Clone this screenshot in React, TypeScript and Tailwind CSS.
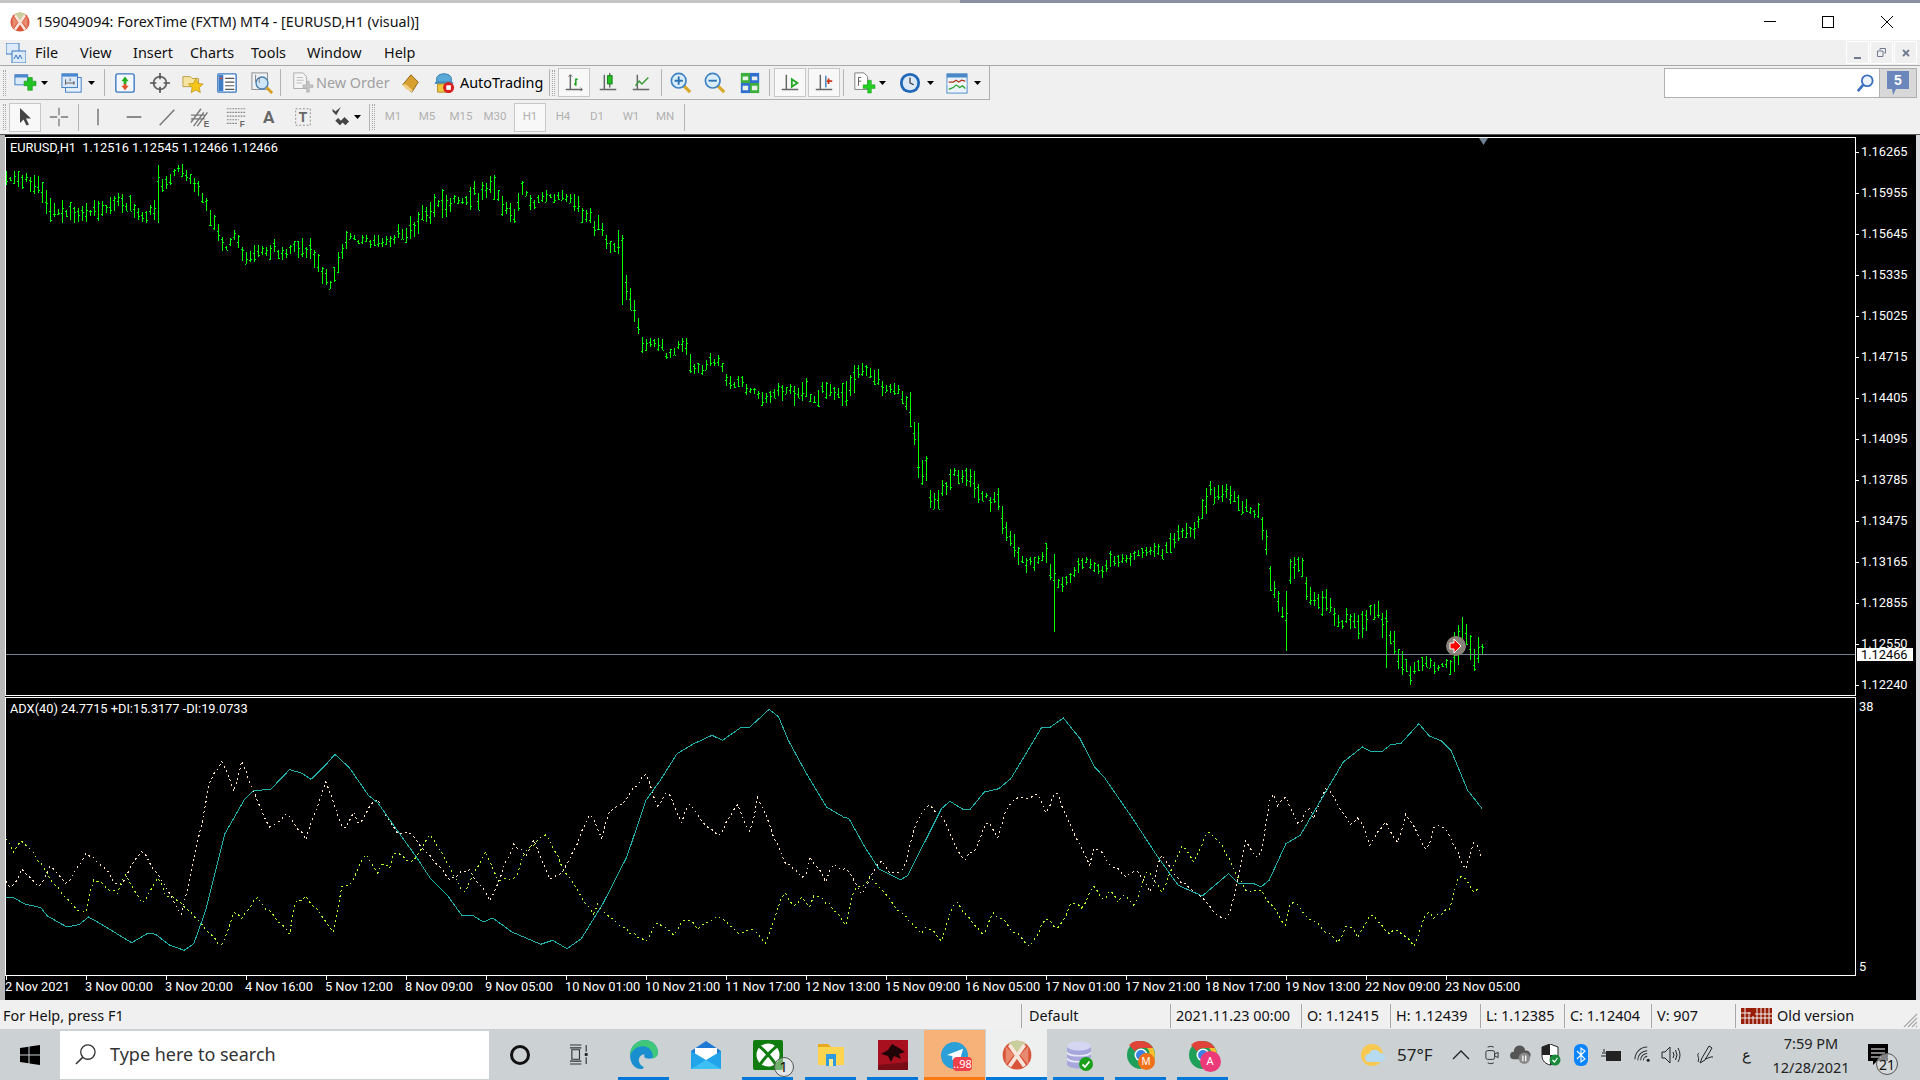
import React, { useMemo } from "react";

type P = [number, number];

const rng = (seed: number) => {
  let s = seed;
  return () => {
    s = (s * 1664525 + 1013904223) >>> 0;
    return s / 4294967296;
  };
};

const interp = (pts: P[], x: number) => {
  for (let i = 1; i < pts.length; i++) {
    if (x <= pts[i][0]) {
      const [x0, y0] = pts[i - 1];
      const [x1, y1] = pts[i];
      return y0 + ((y1 - y0) * (x - x0)) / (x1 - x0 || 1);
    }
  }
  return pts[pts.length - 1][1];
};

// price path, read off the chart in three stretches
const path1: P[] = [[6, 180], [20, 178], [40, 187], [50, 212], [80, 215], [110, 208], [125, 202], [140, 220], [155, 210], [160, 187], [180, 169], [195, 187], [210, 213], [225, 250], [235, 237], [245, 263], [260, 247], [285, 253], [310, 247], [330, 287], [338, 263], [345, 240], [385, 240], [405, 233], [430, 213], [440, 202], [480, 195]];
const path2: P[] = ([[8, 125], [40, 115], [60, 150], [100, 190], [115, 170], [130, 110], [150, 165], [200, 130], [260, 145], [300, 175], [330, 200], [345, 250], [360, 200], [385, 300], [400, 300], [420, 260], [432, 400], [450, 440], [465, 510], [490, 590], [530, 575], [560, 620], [590, 590], [620, 590], [635, 660], [680, 640], [715, 625], [745, 700], [800, 710], [840, 745], [870, 745], [900, 720], [930, 720], [950, 740], [975, 710], [995, 750], [1030, 720], [1060, 730], [1100, 735], [1125, 680], [1185, 670], [1205, 710], [1255, 720], [1285, 770], [1300, 825], [1315, 960], [1340, 960], [1352, 1060], [1380, 1040], [1400, 1010], [1425, 970], [1460, 985], [1490, 990]] as P[]).map(([x, y]) => [480 + x / 3, 150 + y / 3] as P);
const path3: P[] = ([[5, 380], [30, 385], [55, 390], [70, 470], [90, 500], [105, 530], [130, 570], [160, 570], [200, 550], [222, 640], [240, 650], [270, 630], [300, 590], [320, 570], [345, 600], [370, 610], [385, 560], [420, 570], [450, 565], [490, 540], [520, 530], [545, 570], [570, 510], [600, 495], [640, 480], [665, 430], [690, 365], [750, 365], [780, 415], [835, 430], [855, 490], [870, 640], [890, 670], [915, 760], [930, 610], [965, 590], [980, 680], [1020, 690], [1050, 720], [1080, 760], [1110, 745], [1140, 780], [1165, 720], [1195, 730], [1220, 800], [1245, 830], [1270, 880], [1290, 905], [1320, 895], [1350, 880], [1365, 895], [1410, 890], [1425, 840], [1445, 810], [1470, 820], [1480, 860], [1507, 840]] as P[]).map(([x, y]) => [980 + x / 3, 370 + y / 3] as P);
const pricePath = [...path1, ...path2.slice(0, -1), ...path3];

// the long bars that stand out
const spikes: [number, number, number][] = [[158, 165, 223], [622, 235, 305], [910, 392, 427], [918, 423, 478], [1054, 554, 632], [1286, 591, 651], [1386, 610, 668], [1454, 632, 672], [1458, 625, 665], [1462, 617, 646], [1466, 624, 645], [1470, 635, 660], [1474, 649, 671], [1478, 637, 663], [1482, 644, 654]];

const sub = (pts: number[][], ox: number): P[] => pts.map(([x, y]) => [ox + x / 2.09, 697 + y / 3] as P);

const adx: P[] = [
  ...sub([[12, 600], [30, 603], [50, 620], [85, 632], [100, 658], [140, 690], [165, 683], [185, 660], [210, 680], [275, 737], [310, 708], [325, 712], [355, 745], [385, 760], [405, 740], [430, 640], [470, 410], [510, 310], [530, 280], [565, 278], [605, 218], [630, 228], [650, 247], [680, 205], [700, 172], [730, 212], [770, 295], [790, 318], [830, 400], [870, 480], [900, 545], [935, 595], [965, 655], [990, 657], [1010, 675], [1030, 663], [1070, 705], [1130, 742], [1155, 730], [1185, 755], [1215, 725], [1260, 620], [1310, 480], [1350, 310], [1380, 250], [1415, 170], [1450, 140], [1488, 115], [1510, 130], [1550, 90]], 0),
  ...sub([[0, 90], [40, 37], [60, 60], [80, 130], [120, 235], [160, 330], [195, 360], [207, 365], [240, 450], [270, 517], [315, 548], [330, 535], [360, 450], [400, 335], [418, 313], [445, 337], [460, 337], [490, 285], [520, 275], [545, 245], [610, 90], [625, 93], [655, 63], [690, 125], [720, 210], [740, 240], [800, 365], [850, 475], [895, 565], [945, 597], [1000, 530], [1020, 558], [1050, 558], [1068, 570], [1085, 550], [1120, 440], [1150, 415], [1240, 195], [1280, 150], [1297, 163], [1322, 163], [1340, 142], [1360, 140], [1398, 80], [1420, 117], [1445, 132], [1465, 160], [1500, 280], [1530, 335]], 750),
];
const plusDi: P[] = [
  ...sub([[12, 555], [25, 570], [48, 515], [80, 575], [105, 505], [140, 560], [180, 470], [215, 505], [250, 575], [295, 458], [340, 555], [380, 655], [405, 490], [440, 250], [465, 188], [490, 290], [507, 188], [525, 270], [565, 395], [600, 348], [640, 425], [680, 255], [720, 405], [740, 340], [750, 390], [785, 300], [830, 410], [860, 410], [900, 480], [940, 545], [980, 515], [1025, 610], [1050, 520], [1075, 440], [1100, 475], [1115, 425], [1150, 555], [1180, 520], [1235, 345], [1258, 430], [1270, 350], [1300, 320], [1350, 230], [1375, 330], [1395, 280], [1425, 380], [1440, 315], [1480, 395], [1505, 415], [1540, 322]], 0),
  ...sub([[0, 405], [18, 298], [45, 400], [70, 490], [115, 550], [125, 475], [160, 555], [170, 505], [205, 520], [235, 590], [275, 485], [290, 525], [320, 525], [350, 365], [378, 315], [395, 365], [405, 365], [445, 490], [475, 450], [495, 365], [520, 425], [530, 350], [555, 305], [605, 295], [620, 355], [638, 275], [680, 420], [712, 510], [720, 445], [760, 510], [790, 540], [805, 515], [840, 590], [858, 470], [900, 555], [935, 590], [990, 670], [1005, 650], [1035, 425], [1065, 495], [1090, 280], [1105, 330], [1115, 290], [1150, 395], [1165, 325], [1180, 365], [1205, 265], [1255, 385], [1272, 360], [1295, 440], [1330, 375], [1355, 445], [1372, 345], [1415, 470], [1430, 385], [1450, 385], [1495, 515], [1515, 430], [1530, 480]], 750),
];
const minusDi: P[] = [
  ...sub([[12, 420], [30, 470], [40, 428], [70, 465], [100, 535], [150, 625], [180, 650], [195, 545], [245, 590], [260, 530], [300, 625], [330, 540], [345, 590], [380, 620], [400, 650], [465, 750], [490, 645], [505, 670], [535, 598], [605, 712], [615, 620], [640, 598], [670, 650], [697, 705], [715, 560], [735, 565], [765, 465], [790, 530], [800, 490], [815, 515], [825, 465], [860, 495], [900, 410], [970, 590], [1015, 460], [1040, 550], [1080, 545], [1095, 470], [1140, 410], [1180, 520], [1240, 650], [1250, 625], [1290, 680], [1350, 735], [1370, 680], [1410, 710], [1430, 660], [1460, 695], [1500, 655], [1545, 710]], 0),
  ...sub([[0, 695], [35, 735], [70, 585], [95, 630], [110, 600], [125, 630], [135, 595], [165, 620], [200, 680], [220, 560], [240, 570], [250, 535], [280, 590], [330, 670], [360, 715], [370, 685], [400, 730], [428, 610], [490, 720], [505, 645], [530, 670], [585, 752], [620, 660], [645, 700], [675, 610], [695, 640], [715, 565], [740, 615], [755, 580], [770, 615], [780, 590], [805, 635], [830, 510], [860, 590], [905, 445], [930, 500], [955, 395], [985, 445], [1010, 510], [1040, 590], [1065, 575], [1120, 685], [1130, 605], [1160, 650], [1230, 735], [1250, 680], [1272, 720], [1298, 650], [1340, 715], [1350, 695], [1390, 748], [1415, 640], [1430, 665], [1465, 630], [1475, 555], [1490, 535], [1515, 590], [1527, 560]], 750),
];

const toPoints = (pts: P[]) => pts.map(([x, y]) => `${x.toFixed(1)},${y.toFixed(1)}`).join(" ");

const prices = ["1.16265", "1.15955", "1.15645", "1.15335", "1.15025", "1.14715", "1.14405", "1.14095", "1.13785", "1.13475", "1.13165", "1.12855", "1.12550", "1.12240"];
const times = ["2 Nov 2021", "3 Nov 00:00", "3 Nov 20:00", "4 Nov 16:00", "5 Nov 12:00", "8 Nov 09:00", "9 Nov 05:00", "10 Nov 01:00", "10 Nov 21:00", "11 Nov 17:00", "12 Nov 13:00", "15 Nov 09:00", "16 Nov 05:00", "17 Nov 01:00", "17 Nov 21:00", "18 Nov 17:00", "19 Nov 13:00", "22 Nov 09:00", "23 Nov 05:00"];

const Ico = ({ className = "", children }: { className?: string; children: React.ReactNode }) => (
  <svg viewBox="0 0 24 24" className={`w-[24px] h-[22px] shrink-0 ${className}`}>{children}</svg>
);

const Arrow = ({ className = "" }: { className?: string }) => (
  <svg viewBox="0 0 7 4" className={`w-[7px] h-[4px] shrink-0 ${className}`}><path d="M0 0H7L3.500 4Z" fill="#000" /></svg>
);

const Sep = ({ className = "" }: { className?: string }) => <div className={`w-[1px] h-[27px] bg-[#b4b4b4] shrink-0 ${className}`} />;

const Grip = ({ className = "" }: { className?: string }) => (
  <div className={`w-[3px] h-[26px] shrink-0 border-x border-dotted border-[#a8a8a8] ${className}`} />
);

const Pressed = ({ className = "", children }: { className?: string; children: React.ReactNode }) => (
  <div className={`w-[32px] h-[29px] shrink-0 flex items-center justify-center bg-[#f8f8f8] border border-[#c8c8c8] ${className}`}>{children}</div>
);

const Logo = ({ size }: { size: number }) => (
  <svg viewBox="0 0 24 24" width={size} height={size} className="shrink-0">
    <circle cx="12" cy="12" r="11.500" fill="#d8553a" />
    <path d="M5 3A11 11 0 0 1 19 3L12 10Z" fill="#c9cf9c" />
    <path d="M3 20 9.500 12 3 5ZM21 20 14.500 12 21 5Z" fill="#e88a70" />
    <path d="M6 21 18 4M6 4 18 21" stroke="#f7e6dc" strokeWidth="3" fill="none" />
  </svg>
);

const Chart = () => {
  const { wicks, ticks } = useMemo(() => {
    const r = rng(41);
    let w = "";
    let t = "";
    for (let x = 6; x <= 1482; x += 4) {
      const mid = interp(pricePath, x) + (r() - 0.5) * 6;
      const slope = Math.abs(interp(pricePath, x + 6) - interp(pricePath, x - 6));
      // quiet and busy stretches take turns
      const vol = 0.55 + 0.45 * Math.abs(Math.sin(x / 41) + Math.sin(x / 97));
      let hi = mid - 1 - r() * 9 * vol - slope * 0.15;
      let lo = mid + 1 + r() * 9 * vol + slope * 0.15;
      const sp = spikes.find((s) => Math.abs(s[0] - x) <= 1);
      if (sp) {
        hi = sp[1];
        lo = sp[2];
      }
      const o = Math.round(hi + (lo - hi) * r());
      const c = Math.round(hi + (lo - hi) * r());
      w += `M${x + 0.5} ${Math.round(hi)}V${Math.round(lo)}`;
      t += `M${x - 1} ${o + 0.5}H${x}M${x + 1} ${c + 0.5}H${x + 2}`;
    }
    return { wicks: w, ticks: t };
  }, []);

  const [plus, minus] = useMemo(() => {
    const r = rng(7);
    const jitter = (pts: P[]) => {
      const out: P[] = [];
      for (let x = pts[0][0]; x <= pts[pts.length - 1][0]; x += 4) out.push([x, interp(pts, x) + (r() - 0.5) * 4]);
      return out;
    };
    return [jitter(plusDi), jitter(minusDi)];
  }, []);

  return (
    <div className="flex flex-col w-[1911px] bg-black text-white text-[12.8px] font-[family-name:Roboto,sans-serif]">
      <div className="h-[2px]" />
      <div className="flex h-[559px]">
        <div className="relative w-[1851px] h-full border border-white">
          <svg viewBox="6 138 1849 557" className="block w-[1849px] h-[557px]">
            <path d={wicks} stroke="#00ff00" strokeWidth="1" shapeRendering="crispEdges" fill="none" />
            <path d={ticks} stroke="#00ff00" strokeWidth="1" shapeRendering="crispEdges" fill="none" />
            <path d="M6 654.500H1855" stroke="#708090" strokeWidth="1" shapeRendering="crispEdges" />
            <path d="M1479 138H1488L1483.500 145Z" fill="#708090" />
            <circle cx="1456" cy="646" r="10" fill="#8a8178" />
            <path d="M1450 643h4v-4l7 7-7 7v-4h-4Z" fill="#ff0000" stroke="#fff" strokeWidth="1" />
          </svg>
          <div className="absolute left-[4px] top-[3px] leading-[14px] whitespace-pre">EURUSD,H1  1.12516 1.12545 1.12466 1.12466</div>
        </div>
        <div className="relative flex flex-col gap-[27px] pt-[8px] w-[60px]">
          {prices.map((p) => (
            <div key={p} className="flex items-center h-[14px] leading-[14px]">
              <div className="w-[3px] h-[1px] bg-white" />
              <span className="ml-[2px]">{p}</span>
            </div>
          ))}
          <div className="absolute left-[1px] top-[511px] w-[56px] h-[13px] leading-[13px] bg-white text-black pl-[4px]">1.12466</div>
        </div>
      </div>
      <div className="h-[1px]" />
      <div className="flex h-[279px]">
        <div className="relative w-[1851px] h-full border border-white">
          <svg viewBox="6 698 1849 277" className="block w-[1849px] h-[277px]">
            <polyline points={toPoints(plus)} stroke="#ffe4c4" strokeWidth="1" strokeDasharray="2 3" shapeRendering="crispEdges" fill="none" />
            <polyline points={toPoints(minus)} stroke="#adff2f" strokeWidth="1" strokeDasharray="2 3" shapeRendering="crispEdges" fill="none" />
            <polyline points={toPoints(adx)} stroke="#20b2aa" strokeWidth="1" shapeRendering="crispEdges" fill="none" />
          </svg>
          <div className="absolute left-[4px] top-[4px] leading-[14px]">ADX(40) 24.7715 +DI:15.3177 -DI:19.0733</div>
        </div>
        <div className="flex flex-col justify-between pl-[3px] pt-[3px] pb-[2px] leading-[14px]">
          <span>38</span>
          <span>5</span>
        </div>
      </div>
      <div className="flex h-[24px]">
        {times.map((t) => (
          <div key={t} className="w-[80px] shrink-0 flex flex-col">
            <div className="w-[1px] h-[4px] ml-[1px] bg-white" />
            <span className="leading-[14px] whitespace-nowrap">{t}</span>
          </div>
        ))}
      </div>
    </div>
  );
};

const Toolbar1 = () => (
  <div className="flex items-center h-[34px] w-[990px] pl-[3px] border-b border-r border-[#b0b0b0] bg-[#f0f0f0] text-[14.4px]">
    <Grip />
    <Ico className="ml-[7px]">
      <rect x="1" y="3" width="14" height="11" fill="#dbe8f8" stroke="#3a78c0" />
      <rect x="1" y="3" width="14" height="3" fill="#4a88d0" />
      <path d="M11 10h4V6h5v4h4v5h-4v5h-5v-5h-4Z" fill="#22c222" stroke="#0f8f0f" strokeWidth=".6" />
    </Ico>
    <Arrow className="ml-[4px]" />
    <Ico className="ml-[12px]">
      <rect x="5" y="6" width="17" height="16" fill="#e8f0fa" stroke="#3a78c0" />
      <rect x="1" y="2" width="17" height="15" fill="#dbe8f8" stroke="#3a78c0" />
      <rect x="1" y="2" width="17" height="3" fill="#4a88d0" />
      <path d="M5 8v6M5 12h10M10 7v3M14 10v4" stroke="#555" fill="none" />
    </Ico>
    <Arrow className="ml-[4px]" />
    <Sep className="ml-[9px]" />
    <Ico className="ml-[8px]">
      <rect x="2" y="2" width="20" height="20" rx="2" fill="#f4f8fd" stroke="#3a78c0" strokeWidth="1.500" />
      <path d="M12 5l4 5h-2.500v3h-3v-3H8Z" fill="#22b022" />
      <path d="M12 20l4-5h-2.500v-2h-3v2H8Z" fill="#e0502a" />
    </Ico>
    <Ico className="ml-[11px]">
      <circle cx="12" cy="12" r="7" fill="none" stroke="#666" strokeWidth="2" />
      <path d="M12 1v7M12 16v7M1 12h7M16 12h7" stroke="#555" strokeWidth="1.800" />
    </Ico>
    <Ico className="ml-[9px]">
      <path d="M1 5h8l2 2h7v9H1Z" fill="#f6e4a0" stroke="#b89a40" />
      <path d="M15 7l2.500 5.500 5.500.5-4 4 1 5.500-5-2.800-5 2.800 1-5.500-4-4 5.500-.5Z" fill="#f5c518" stroke="#b08a10" strokeWidth=".7" />
    </Ico>
    <Ico className="ml-[10px]">
      <rect x="2" y="2" width="20" height="20" rx="1" fill="#fff" stroke="#3a78c0" strokeWidth="1.500" />
      <rect x="3" y="3" width="5" height="18" fill="#3f7ec6" />
      <path d="M10 7h10M10 11h10M10 15h10M10 19h10" stroke="#555" strokeWidth="1.200" />
      <path d="M4 7h3" stroke="#e04030" strokeWidth="1.500" />
    </Ico>
    <Ico className="ml-[11px]">
      <rect x="1" y="1" width="17" height="18" fill="#eef2f6" stroke="#888" />
      <circle cx="12" cy="12" r="6.500" fill="#cfe6f8" stroke="#4a7fb0" strokeWidth="1.500" />
      <path d="M17 17l6 6" stroke="#d8a020" strokeWidth="3" />
      <path d="M5 3v8M9 6v6" stroke="#777" />
    </Ico>
    <Sep className="ml-[6px]" />
    <Ico className="ml-[9px]">
      <path d="M3 1h10l4 4v13H3Z" fill="#f4f4f4" stroke="#aaa" />
      <path d="M6 6h7M6 9h8M6 12h6" stroke="#bbb" />
      <path d="M13 14h4v-4h3v4h4v3h-4v5h-3v-5h-4Z" fill="#c4c4c4" stroke="#a0a0a0" strokeWidth=".5" />
    </Ico>
    <span className="ml-[2px] w-[72px] text-[#a0a0a0] whitespace-nowrap">New Order</span>
    <Ico className="ml-[10px]">
      <path d="M4 14 13 3l8 8-7 11Z" fill="#d8a030" stroke="#8a5f10" />
      <path d="M4 14l3 4 7 4 1-2-7-6-3-1Z" fill="#f0d080" />
    </Ico>
    <Ico className="ml-[10px]">
      <path d="M4 11V7c0-3 4-5 8-5s8 2 8 5v4Z" fill="#58a8d8" stroke="#2b78a8" />
      <path d="M2 11h20v2H2Z" fill="#3c8cc0" />
      <path d="M5 13h14v9H5Z" fill="#f0c840" stroke="#b08a20" />
      <circle cx="17" cy="17" r="6" fill="#d82020" />
      <rect x="14.500" y="14.500" width="5" height="5" fill="#fff" />
    </Ico>
    <span className="ml-[4px] w-[84px] text-black whitespace-nowrap">AutoTrading</span>
    <Sep className="ml-[5px]" />
    <Grip className="ml-[2px]" />
    <Pressed className="ml-[3px]">
      <Ico>
        <path d="M8 3v17M3 19h18" stroke="#666" strokeWidth="1.600" fill="none" />
        <path d="M6 5l2-2 2 2M19 17l2 2-2 2" stroke="#666" fill="none" />
        <path d="M14 7v8M14 8h2M12 13h2" stroke="#16a016" strokeWidth="1.600" fill="none" />
      </Ico>
    </Pressed>
    <Ico className="ml-[6px]">
      <path d="M8 3v17M3 19h18" stroke="#666" strokeWidth="1.600" fill="none" />
      <path d="M14 1v16" stroke="#222" />
      <rect x="11.500" y="4" width="5" height="9" fill="#26c026" stroke="#0f7f0f" />
    </Ico>
    <Ico className="ml-[9px]">
      <path d="M8 3v17M3 19h18" stroke="#666" strokeWidth="1.600" fill="none" />
      <path d="M6 15 10 10 13 13 20 6" stroke="#3a9a3a" strokeWidth="1.600" fill="none" />
    </Ico>
    <Sep className="ml-[8px]" />
    <Ico className="ml-[7px]">
      <path d="M14 14l8 8" stroke="#d8a828" strokeWidth="3.500" />
      <circle cx="9.500" cy="9.500" r="8" fill="#d8ecfa" stroke="#3d82c4" strokeWidth="1.800" />
      <path d="M9.500 5v9M5 9.500h9" stroke="#2e70b0" strokeWidth="2" />
    </Ico>
    <Ico className="ml-[10px]">
      <path d="M14 14l8 8" stroke="#d8a828" strokeWidth="3.500" />
      <circle cx="9.500" cy="9.500" r="8" fill="#d8ecfa" stroke="#3d82c4" strokeWidth="1.800" />
      <path d="M5 9.500h9" stroke="#2e70b0" strokeWidth="2" />
    </Ico>
    <Ico className="ml-[11px]">
      <rect x="2" y="1" width="10" height="11" fill="#3cae3c" />
      <rect x="12" y="1" width="10" height="11" fill="#2f6fd0" />
      <rect x="2" y="12" width="10" height="11" fill="#2f6fd0" />
      <rect x="12" y="12" width="10" height="11" fill="#3cae3c" />
      <path d="M4 5h6v4H4ZM14 5h6v4h-6ZM4 15h6v5H4ZM14 15h6v5h-6Z" fill="#e8f0e8" />
    </Ico>
    <Sep className="ml-[7px]" />
    <Pressed className="ml-[4px]">
      <Ico>
        <path d="M8 3v17M3 19h18" stroke="#666" strokeWidth="1.600" fill="none" />
        <path d="M14 8l6 4-6 4Z" fill="none" stroke="#22a822" strokeWidth="2" />
      </Ico>
    </Pressed>
    <Pressed className="ml-[2px]">
      <Ico>
        <path d="M8 3v17M3 19h18" stroke="#666" strokeWidth="1.600" fill="none" />
        <path d="M14 4v13" stroke="#2e70b0" strokeWidth="1.400" />
        <path d="M17 7v6M15 10h6" stroke="#c83818" strokeWidth="2" />
      </Ico>
    </Pressed>
    <Sep className="ml-[3px]" />
    <Ico className="ml-[8px]">
      <path d="M2 1h10l4 4v14H2Z" fill="#fff" stroke="#777" />
      <path d="M6 6v9M6 6h3M6 10h3" stroke="#555" fill="none" />
      <path d="M11 14h5v-5h4v5h4v4h-4v5h-4v-5h-5Z" fill="#22d022" stroke="#0f9010" strokeWidth=".5" />
    </Ico>
    <Arrow className="ml-[3px]" />
    <Ico className="ml-[12px]">
      <circle cx="12" cy="12" r="11" fill="#1f68b8" />
      <circle cx="12" cy="12" r="8" fill="#dbe9f6" />
      <path d="M12 6v6l4 2" stroke="#333" strokeWidth="1.300" fill="none" />
    </Ico>
    <Arrow className="ml-[5px]" />
    <Ico className="ml-[11px]">
      <rect x="1" y="2" width="22" height="21" fill="#eaf2fb" stroke="#4a88c8" />
      <rect x="1" y="2" width="22" height="4" fill="#4a88c8" />
      <path d="M3 11h5l3-2 3 2 3-2 4 1" stroke="#b03a18" strokeWidth="1.300" fill="none" />
      <path d="M3 19l5-2 3-3 4 3 3-2 3 3" stroke="#28a028" strokeWidth="1.300" fill="none" />
      <path d="M1 13h22" stroke="#fff" />
    </Ico>
    <Arrow className="ml-[5px]" />
  </div>
);

const periods = ["M1", "M5", "M15", "M30"];
const periods2 = ["H4", "D1", "W1", "MN"];

const Toolbar2 = () => (
  <div className="flex items-center h-[34px] pl-[3px] text-[11.5px] text-[#b0b0b0] font-[family-name:Roboto,sans-serif]">
    <Grip />
    <Pressed className="ml-[3px]">
      <svg viewBox="0 0 14 20" className="w-[14px] h-[20px]"><path d="M2 1v15l3.500-3.500 3 6 2.500-1-3-6h5Z" fill="#444" /></svg>
    </Pressed>
    <Ico className="ml-[6px]"><path d="M12 2v8M12 14v8M2 12h8M14 12h8" stroke="#777" strokeWidth="1.400" /></Ico>
    <Sep className="ml-[7px]" />
    <Ico className="ml-[7px]"><path d="M12 3v18" stroke="#777" strokeWidth="1.600" /></Ico>
    <Ico className="ml-[12px]"><path d="M4 12h16" stroke="#666" strokeWidth="1.600" /></Ico>
    <Ico className="ml-[9px]"><path d="M4 21 20 4" stroke="#777" strokeWidth="1.600" /></Ico>
    <Ico className="ml-[10px]">
      <path d="M1 18 12 3M4 22 15 7M8 22 19 7M1 10h15M1 14h15" stroke="#777" strokeWidth="1.500" />
      <text x="15" y="23" fontSize="9" fontWeight="700" fill="#666" fontFamily="Liberation Sans">E</text>
    </Ico>
    <Ico className="ml-[11px]">
      <path d="M2 3h20M2 7h20M2 11h20M2 15h13M2 19h11" stroke="#888" strokeWidth="1.200" strokeDasharray="2 1" />
      <text x="16" y="23" fontSize="9" fontWeight="700" fill="#666" fontFamily="Liberation Sans">F</text>
    </Ico>
    <span className="ml-[15px] w-[11px] text-[17px] font-bold text-[#666] leading-none">A</span>
    <Ico className="ml-[17px]">
      <rect x="4" y="3" width="16" height="18" fill="none" stroke="#888" strokeDasharray="2 2" />
      <text x="12" y="17" textAnchor="middle" fontSize="15" fontWeight="700" fill="#666" fontFamily="Liberation Sans">T</text>
    </Ico>
    <Ico className="ml-[12px]">
      <path d="M5 3l3 3 6-5-5 9-4-4ZM11 13l5 5-3 3-5-5ZM18 12l5 5-4 4-5-5Z" fill="#444" />
    </Ico>
    <Arrow className="ml-[3px]" />
    <Sep className="ml-[8px]" />
    <Grip className="ml-[2px]" />
    <div className="ml-[1px] flex items-center">
      {periods.map((p) => (
        <span key={p} className="w-[34px] text-center">{p}</span>
      ))}
      <div className="ml-[2px] w-[32px] h-[29px] flex items-center justify-center bg-[#f8f8f8] border border-[#c8c8c8]">H1</div>
      {periods2.map((p) => (
        <span key={p} className="w-[34px] text-center">{p}</span>
      ))}
    </div>
    <Sep className="ml-[2px]" />
  </div>
);

const statusCells = [
  { w: "w-[149px]", t: "Default", pl: "pl-[7px]" },
  { w: "w-[131px]", t: "2021.11.23 00:00", pl: "pl-[5px]" },
  { w: "w-[89px]", t: "O: 1.12415", pl: "pl-[5px]" },
  { w: "w-[90px]", t: "H: 1.12439", pl: "pl-[5px]" },
  { w: "w-[84px]", t: "L: 1.12385", pl: "pl-[5px]" },
  { w: "w-[87px]", t: "C: 1.12404", pl: "pl-[5px]" },
  { w: "w-[84px]", t: "V: 907", pl: "pl-[5px]" },
];

const StatusBar = () => (
  <div className="relative flex items-center h-[29px] pt-[3px] bg-[#f0f0f0] text-[14.4px] text-[#111] whitespace-nowrap">
    <div className="w-[1021px] pl-[3px]">For Help, press F1</div>
    {statusCells.map((c) => (
      <div key={c.t} className={`${c.w} ${c.pl} h-[24px] leading-[24px] border-l border-[#a8a8a8]`}>{c.t}</div>
    ))}
    <div className="flex items-center h-[24px] border-l border-[#a8a8a8] pl-[5px]">
      <svg viewBox="0 0 31 16" className="w-[31px] h-[16px]">
        <rect width="31" height="16" fill="#9a1d08" />
        <path d="M4 0v16M8 4v12M12 8v8M16 0v16M20 0v16M24 0v16M28 0v16M0 5h10M0 10h31M14 6h17" stroke="#f0f0f0" strokeWidth="1" />
      </svg>
      <span className="ml-[5px]">Old version</span>
    </div>
    <svg viewBox="0 0 16 16" className="absolute right-[2px] bottom-[1px] w-[16px] h-[16px]">
      <path d="M15 2 2 15M15 6 6 15M15 10 10 15M15 14 14 15" stroke="#a8a8a8" strokeWidth="1.200" />
    </svg>
  </div>
);

const Slot = ({ w = "w-[51px]", active = true, children, extra = "" }: { w?: string; active?: boolean; children: React.ReactNode; extra?: string }) => (
  <div className={`relative flex items-center justify-center h-[51px] shrink-0 ${w} ${extra}`}>
    {children}
    {active && <div className="absolute left-0 right-0 bottom-0 h-[3px] bg-[#0078d7]" />}
  </div>
);

const Badge = ({ className, children }: { className: string; children: React.ReactNode }) => (
  <div className={`absolute flex items-center justify-center rounded-full ${className}`}>{children}</div>
);

const ChromeMark = () => (
  <svg viewBox="0 0 28 28" className="w-[28px] h-[28px]">
    <circle cx="14" cy="14" r="14" fill="#1fa05a" />
    <path d="M14 0A14 14 0 0 1 26 7H14a7 7 0 0 0-6 3.500L2 4A14 14 0 0 1 14 0Z" fill="#e04438" />
    <path d="M26 7A14 14 0 0 1 14 28l6-10a7 7 0 0 0 0-11Z" fill="#fbc02d" />
    <circle cx="14" cy="14" r="6.500" fill="#fff" />
    <circle cx="14" cy="14" r="5" fill="#3b82e8" />
  </svg>
);

const Taskbar = () => (
  <div className="flex items-center h-[51px] bg-[#ccd2d4] text-[#222] font-[family-name:'Noto_Sans',sans-serif]">
    <svg viewBox="0 0 20 20" className="ml-[20px] w-[20px] h-[20px] shrink-0">
      <path d="M0 3 8.500 1.800V9.500H0ZM9.500 1.600 20 0V9.500H9.500ZM0 10.500H8.500V18.200L0 17ZM9.500 10.500H20V20L9.500 18.400Z" fill="#000" />
    </svg>
    <div className="ml-[20px] flex items-center w-[429px] h-[48px] bg-white shrink-0">
      <svg viewBox="0 0 22 22" className="ml-[15px] w-[21px] h-[21px]"><circle cx="13.500" cy="8.500" r="7.500" fill="none" stroke="#333" strokeWidth="1.400" /><path d="M8 14 1 21" stroke="#333" strokeWidth="1.600" /></svg>
      <span className="ml-[14px] text-[18px] text-[#333] whitespace-nowrap">Type here to search</span>
    </div>
    <svg viewBox="0 0 20 20" className="ml-[21px] w-[20px] h-[20px] shrink-0"><circle cx="10" cy="10" r="8.500" fill="none" stroke="#111" strokeWidth="3" /></svg>
    <svg viewBox="0 0 22 22" className="ml-[39px] w-[21px] h-[21px] shrink-0">
      <path d="M1 1h12M1 21h12M1 4h12M1 18h12M3 6h8v10H3ZM18 1v7M18 14v7" stroke="#333" strokeWidth="1.200" fill="none" />
      <rect x="16.500" y="9.500" width="3" height="3" fill="#222" />
    </svg>
    <Slot extra="ml-[28px]">
      <svg viewBox="0 0 30 30" className="w-[31px] h-[31px]">
        <path d="M2 16C2 6 10 1 16 1c8 0 13 6 13 12 0 4-4 6-9 6-3 0-5-1-4-4-6 0-8 8-1 12 1 1-1 2-3 2C6 29 2 23 2 16Z" fill="#1a8fd0" />
        <path d="M16 1c8 0 13 6 13 12 0 3-2 5-5 6 1-6-3-12-10-12C8 7 4 11 2 16 2 6 10 1 16 1Z" fill="#3fc87a" />
      </svg>
    </Slot>
    <Slot active={false} extra="ml-[11px]">
      <svg viewBox="0 0 30 28" className="w-[30px] h-[28px]">
        <path d="M0 10 15 0 30 10V28H0Z" fill="#1f79d4" />
        <path d="M4 7h22v10l-11 6L4 17Z" fill="#fff" />
        <path d="M0 10 15 19 30 10V28H0Z" fill="#22a4ea" />
        <path d="M0 28 15 19 30 28Z" fill="#3ec0f5" />
      </svg>
    </Slot>
    <Slot extra="ml-[11px]">
      <div className="relative w-[30px] h-[30px]">
        <svg viewBox="0 0 30 30" className="w-[30px] h-[30px]">
          <rect width="30" height="30" rx="2" fill="#107c10" />
          <circle cx="15" cy="15" r="11.500" fill="#fff" />
          <path d="M6 6Q15 13 24 26M24 6Q15 13 6 26" stroke="#107c10" strokeWidth="3" fill="none" />
        </svg>
        <Badge className="left-[21px] top-[17px] w-[20px] h-[20px] border border-[#555] bg-[#ffffff66] text-[#111] text-[15px]">1</Badge>
      </div>
    </Slot>
    <Slot extra="ml-[12px]">
      <svg viewBox="0 0 28 23" className="w-[28px] h-[23px]">
        <path d="M1 1h10l3 3h13v18H1Z" fill="#ffd54f" />
        <path d="M1 1h10l3 3H1Z" fill="#e8a820" />
        <path d="M9 11h10v12H9Z" fill="#2e9ae0" />
        <path d="M12 16h4v7h-4Z" fill="#ffe98a" />
      </svg>
    </Slot>
    <Slot extra="ml-[11px]">
      <svg viewBox="0 0 30 30" className="w-[30px] h-[30px]">
        <rect width="30" height="30" fill="#a81020" />
        <path d="M3 14 10 10 14 4 21 8 27 12 21 14 23 19 16 16 13 22 10 16Z" fill="#200508" />
        <path d="M0 25 30 22V30H0Z" fill="#7a0c18" />
      </svg>
    </Slot>
    <div className="relative ml-[6px] flex items-center justify-center w-[61px] h-[50px] mt-[1px] bg-[#f7b27a] shrink-0">
      <div className="relative w-[27px] h-[27px] rounded-full bg-[#2a9fd8] flex items-center justify-center">
        <svg viewBox="0 0 20 20" className="w-[18px] h-[18px]"><path d="M1 10 19 3 15 17 10 13 7 16 7 11Z" fill="#fff" /></svg>
        <div className="absolute left-[12px] top-[15px] w-[19px] h-[14px] rounded-[4px] bg-[#f0404a] text-white text-[11px] leading-[14px] text-center">..98</div>
      </div>
      <div className="absolute left-0 right-0 bottom-0 h-[3px] bg-[#f87a10]" />
    </div>
    <Slot w="w-[61px]" extra="ml-[1px] bg-[#eef0f0]"><Logo size={30} /></Slot>
    <Slot extra="ml-[6px]">
      <div className="relative w-[24px] h-[28px]">
        <svg viewBox="0 0 24 28" className="w-[24px] h-[28px]">
          <path d="M0 5v18c0 6 24 6 24 0V5Z" fill="#a6a8dc" />
          <ellipse cx="12" cy="5" rx="12" ry="4.500" fill="#d5d6f2" />
          <path d="M0 11c0 5 24 5 24 0M0 17c0 5 24 5 24 0" stroke="#e8e8f8" strokeWidth="1.500" fill="none" />
        </svg>
        <Badge className="left-[12px] top-[16px] w-[14px] h-[14px] bg-[#1ba01b]">
          <svg viewBox="0 0 10 10" className="w-[10px] h-[10px]"><path d="M1.500 5.500 4 8 8.500 2.500" stroke="#fff" strokeWidth="1.800" fill="none" /></svg>
        </Badge>
      </div>
    </Slot>
    <Slot extra="ml-[11px]">
      <div className="relative w-[28px] h-[28px]">
        <ChromeMark />
        <Badge className="left-[11px] top-[12px] w-[17px] h-[17px] bg-[#f07018] text-white text-[10px]">M</Badge>
      </div>
    </Slot>
    <Slot extra="ml-[11px]">
      <div className="relative w-[28px] h-[28px]">
        <ChromeMark />
        <Badge className="left-[11px] top-[10px] w-[21px] h-[21px] bg-[#ec3a78] text-white text-[11px]">A</Badge>
      </div>
    </Slot>
    {/* tray */}
    <svg viewBox="0 0 24 28" className="ml-[133px] w-[24px] h-[28px] shrink-0">
      <circle cx="11" cy="14" r="11" fill="#f8c850" />
      <path d="M8 21a4 4 0 0 1 0-8 6 6 0 0 1 11-1 4.500 4.500 0 0 1 1 9Z" fill="#b6daf0" />
    </svg>
    <span className="ml-[12px] w-[43px] text-[17px] text-[#222] whitespace-nowrap">57°F</span>
    <svg viewBox="0 0 18 10" className="ml-[12px] w-[18px] h-[10px] shrink-0"><path d="M1 9 9 1 17 9" stroke="#222" strokeWidth="1.300" fill="none" /></svg>
    <svg viewBox="0 0 16 22" className="ml-[15px] w-[14px] h-[20px] shrink-0">
      <rect x="1" y="6" width="10" height="10" rx="2" fill="none" stroke="#222" />
      <path d="M11 10l4-2v6l-4-2M3 2q4-2 7 0M3 20q4 2 7 0" stroke="#222" fill="none" />
    </svg>
    <svg viewBox="0 0 22 20" className="ml-[11px] w-[21px] h-[19px] shrink-0">
      <path d="M4 15a4 4 0 0 1 0-8 6 6 0 0 1 12-1 4.500 4.500 0 0 1 2 9Z" fill="#555" />
      <circle cx="15" cy="14" r="6" fill="#8a8a8a" />
      <path d="M13.500 11v6M16.500 11v6" stroke="#fff" strokeWidth="1.300" />
    </svg>
    <svg viewBox="0 0 20 22" className="ml-[10px] w-[20px] h-[22px] shrink-0">
      <path d="M1 3 9 0 17 3V12C17 17 13 20 9 21 5 20 1 17 1 12Z" fill="#fff" stroke="#222" />
      <path d="M9 0V11H1V3ZM9 11H17V12C17 17 13 20 9 21Z" fill="#222" />
      <circle cx="14" cy="16" r="5.500" fill="#1a8a3a" />
      <path d="M11.500 16 13.500 18 16.500 14" stroke="#fff" strokeWidth="1.200" fill="none" />
    </svg>
    <svg viewBox="0 0 14 22" className="ml-[13px] w-[14px] h-[22px] shrink-0">
      <rect width="14" height="22" rx="6" fill="#0a84ff" />
      <path d="M3 7 11 15 7 18V4L11 7 3 15" stroke="#fff" strokeWidth="1.100" fill="none" />
    </svg>
    <svg viewBox="0 0 20 14" className="ml-[13px] w-[20px] h-[14px] shrink-0">
      <rect x="5" y="3" width="15" height="10" fill="#222" />
      <path d="M1 5h5M3 1v3M0 8h5" stroke="#222" fill="none" />
    </svg>
    <svg viewBox="0 0 18 18" className="ml-[13px] w-[17px] h-[17px] shrink-0">
      <path d="M1 14A13 13 0 0 1 14 1M4 15A10 10 0 0 1 14 5M7 15A7 7 0 0 1 14 8M10 15A4 4 0 0 1 14 11" stroke="#333" strokeWidth="1.100" fill="none" />
      <circle cx="15" cy="15" r="1.600" fill="#222" />
    </svg>
    <svg viewBox="0 0 20 20" className="ml-[10px] w-[20px] h-[20px] shrink-0">
      <path d="M1 7h3l5-5v16l-5-5H1Z" fill="none" stroke="#222" />
      <path d="M12 7q2 3 0 6M14.500 5q3 5 0 10M17 3q4 7 0 14" stroke="#222" fill="none" />
    </svg>
    <svg viewBox="0 0 20 20" className="ml-[15px] w-[20px] h-[20px] shrink-0">
      <path d="M13 1 6 13 4 18 9 15 16 3ZM2 17C4 12 0 10 3 8M9 14c2 0 6-3 8-2" stroke="#222" fill="none" />
    </svg>
    <span className="ml-[26px] w-[8px] text-[15px] text-[#222]">ع</span>
    <div className="ml-[6px] w-[110px] flex flex-col items-center text-[14.5px] leading-[24px] text-[#222] whitespace-nowrap">
      <span>7:59 PM</span>
      <span>12/28/2021</span>
    </div>
    <div className="relative ml-[2px] w-[20px] h-[21px] shrink-0">
      <svg viewBox="0 0 20 21" className="w-[20px] h-[21px]">
        <path d="M0 0h20v17H9l-4 4v-4H0Z" fill="#000" />
        <path d="M3 5h14M3 9h14M3 13h10" stroke="#fff" strokeWidth="1.200" />
      </svg>
      <Badge className="left-[8px] top-[9px] w-[22px] h-[22px] border border-[#555] bg-[#d8dcde99] text-[14px] text-[#111]">21</Badge>
    </div>
  </div>
);

const menus = [
  { t: "File", w: "w-[45px]" },
  { t: "View", w: "w-[53px]" },
  { t: "Insert", w: "w-[57px]" },
  { t: "Charts", w: "w-[61px]" },
  { t: "Tools", w: "w-[56px]" },
  { t: "Window", w: "w-[77px]" },
  { t: "Help", w: "w-[50px]" },
];

export default function App() {
  return (
    <div className="relative w-[1920px] h-[1080px] overflow-hidden bg-[#f0f0f0] font-[family-name:'Noto_Sans',sans-serif]">
      {/* strip of the window behind */}
      <div className="flex h-[3px]">
        <div className="w-[960px] bg-[#c4c4c4]" />
        <div className="flex-1 bg-[#8a8f9f]" />
      </div>
      <div className="flex items-center h-[37px] pl-[10px] pr-[3px] bg-white text-[14.3px] text-[#111]">
        <Logo size={20} />
        <span className="ml-[6px] whitespace-nowrap">159049094: ForexTime (FXTM) MT4 - [EURUSD,H1 (visual)]</span>
        <div className="ml-auto flex items-center">
          <div className="w-[58px] flex justify-center"><div className="w-[12px] h-[1px] bg-black" /></div>
          <div className="w-[58px] flex justify-center"><div className="w-[12px] h-[12px] border border-black" /></div>
          <div className="w-[60px] flex justify-center">
            <svg viewBox="0 0 12 12" className="w-[12px] h-[12px]"><path d="M0 0 12 12M12 0 0 12" stroke="#000" strokeWidth="1" /></svg>
          </div>
        </div>
      </div>
      <div className="flex items-center h-[26px] border-b border-[#a8a8a8] text-[14.4px] text-[#111]">
        <svg viewBox="0 0 20 20" className="ml-[6px] w-[20px] h-[20px] shrink-0">
          <rect x="0" y="0" width="13" height="11" fill="#dceafa" stroke="#3a78c0" />
          <rect x="6" y="8" width="14" height="12" fill="#dceafa" stroke="#3a78c0" />
          <path d="M8 16l2-4 2 4 2-4 2 4" stroke="#3a78c0" fill="none" />
        </svg>
        <div className="ml-[9px] flex">
          {menus.map((m) => (
            <span key={m.t} className={m.w}>{m.t}</span>
          ))}
        </div>
        <div className="ml-auto mr-[3px] flex gap-[1px]">
          <div className="w-[23px] h-[23px] border border-white flex items-end justify-center pb-[4px]"><div className="w-[7px] h-[2px] bg-[#707a90]" /></div>
          <div className="w-[23px] h-[23px] border border-white flex items-center justify-center">
            <svg viewBox="0 0 9 9" className="w-[9px] h-[9px]"><path d="M3 2V.5H8.500V5H7M.5 3H6V8.500H.5Z" stroke="#707a90" fill="none" /></svg>
          </div>
          <div className="w-[23px] h-[23px] border border-white flex items-center justify-center">
            <svg viewBox="0 0 8 8" className="w-[8px] h-[8px]"><path d="M1 1 7 7M7 1 1 7" stroke="#707a90" strokeWidth="1.800" /></svg>
          </div>
        </div>
      </div>
      <div className="relative">
        <Toolbar1 />
        <div className="absolute left-[1664px] top-[2px] flex h-[30px] w-[253px] border border-[#b0b0b0]">
          <div className="flex-1 bg-white flex items-center justify-end pr-[5px]">
            <svg viewBox="0 0 20 20" className="w-[18px] h-[18px]"><circle cx="12.500" cy="7.500" r="6" fill="#eef4fc" stroke="#3c6fc0" strokeWidth="2" /><path d="M8 12 2 19" stroke="#3c6fc0" strokeWidth="3" /></svg>
          </div>
          <div className="w-[37px] bg-[#d8d8d8] border-l border-[#b0b0b0] flex items-center justify-center">
            <svg viewBox="0 0 22 24" className="w-[22px] h-[24px]">
              <path d="M0 0h22v18H9l-3 6-1-6H0Z" fill="#6a86ba" />
              <text x="11" y="14" textAnchor="middle" fontSize="14" fontWeight="700" fill="#fff" fontFamily="Liberation Sans">5</text>
            </svg>
          </div>
        </div>
      </div>
      <Toolbar2 />
      <div className="flex h-[866px] border-t border-[#555]">
        <div className="w-[5px] bg-[#b8b8b8]" />
        <Chart />
        <div className="w-[4px] bg-[#d8dadf]" />
      </div>
      <StatusBar />
      <Taskbar />
    </div>
  );
}
